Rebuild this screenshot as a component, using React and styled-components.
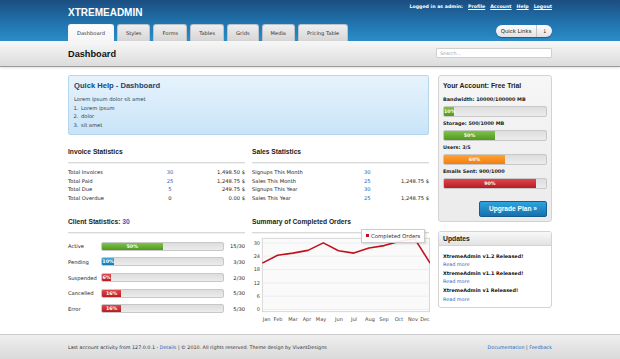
import { Fragment } from 'react'
import styled, { createGlobalStyle } from 'styled-components'

const HEAD = `"Liberation Sans", Arial, sans-serif`

const GlobalStyle = createGlobalStyle`
  html, body { margin: 0; padding: 0; }
  body {
    font-family: "DejaVu Sans", Verdana, sans-serif;
    color: #1e1e1e;
    background: #fff;
  }
  a { color: #2467c4; text-decoration: none; }
`

const Page = styled.div`
  min-height: 100vh;
  display: flex;
  flex-direction: column;
`

const Wrap = styled.div`
  width: 484px;
  margin: 0 auto;
`

/* ---------- header ---------- */

const Header = styled.header`
  height: 41px;
  background: linear-gradient(180deg, #1b4d80 0%, #2173ad 55%, #2b8dc8 100%);
`

const HeaderInner = styled(Wrap)`
  height: 100%;
  display: flex;
  flex-direction: column;
  justify-content: space-between;
`

const TopRow = styled.div`
  display: flex;
  justify-content: space-between;
  align-items: flex-start;
`

const Logo = styled.div`
  margin-top: 8px;
  font-family: ${HEAD};
  font-weight: bold;
  font-size: 10px;
  line-height: 10px;
  color: #fff;
`

const UserBar = styled.div`
  margin-top: 4px;
  font-size: 4.7px;
  line-height: 5px;
  font-weight: bold;
  color: #fff;

  a {
    color: #fff;
    text-decoration: underline;
    margin-left: 5px;
  }
`

const NavRow = styled.div`
  display: flex;
  justify-content: space-between;
  align-items: flex-end;
`

const Tabs = styled.nav`
  display: flex;
  gap: 3px;
`

const Tab = styled.div`
  height: 16px;
  line-height: 16px;
  padding: 0 8px;
  font-size: 5.15px;
  color: #333;
  border: 1px solid ${p => (p.$active ? '#f4f4f4' : '#b9c3cc')};
  border-bottom: none;
  border-radius: 3px 3px 0 0;
  background: ${p =>
    p.$active
      ? 'linear-gradient(180deg, #fdfdfd, #f6f6f6)'
      : 'linear-gradient(180deg, #eeeeee, #d6d6d6)'};
`

const QuickLinks = styled.div`
  margin-bottom: 4px;
  height: 12px;
  display: flex;
  align-items: center;
  border-radius: 6px;
  background: linear-gradient(180deg, #ffffff, #e1e1e1);
  box-shadow: 0 1px 1px rgba(0, 0, 0, 0.3);
  font-size: 5.4px;
  color: #222;
`

const QuickLabel = styled.span`
  padding: 0 5px;
`

const QuickArrow = styled.span`
  height: 100%;
  display: flex;
  align-items: center;
  padding: 0 5px;
  border-left: 1px solid #c4c4c4;
`

/* ---------- title bar ---------- */

const TitleBar = styled.div`
  height: 25px;
  background: linear-gradient(180deg, #f7f7f7, #dcdcdc);
  border-bottom: 1px solid #9a9a9a;
  box-shadow: 0 1px 2px rgba(0, 0, 0, 0.12);
`

const TitleInner = styled(Wrap)`
  height: 100%;
  display: flex;
  justify-content: space-between;
  align-items: center;
`

const PageTitle = styled.h1`
  margin: 0;
  font-family: ${HEAD};
  font-size: 9.2px;
  font-weight: bold;
  color: #111;
`

const Search = styled.input`
  width: 116px;
  height: 10px;
  box-sizing: border-box;
  margin-top: -1px;
  padding: 0 3px;
  border: 1px solid #cfcfcf;
  border-radius: 1px;
  font-family: inherit;
  font-size: 4.8px;
  color: #999;
  outline: none;

  &::placeholder { color: #aaa; }
`

/* ---------- main ---------- */

const Main = styled(Wrap)`
  flex: 1;
  display: grid;
  grid-template-columns: 361px 114px;
  column-gap: 9px;
  align-items: start;
  padding-top: 8px;
`

const Column = styled.div`
  display: flex;
  flex-direction: column;
`

const HelpBox = styled.div`
  height: 60px;
  box-sizing: border-box;
  padding: 5px 5px 0;
  border: 1px solid #b4d6ef;
  border-radius: 2px;
  background: linear-gradient(180deg, #e7f3fc, #c9e4f8);
  color: #2f3f52;
`

const HelpTitle = styled.h2`
  margin: 0;
  font-family: ${HEAD};
  font-size: 7.6px;
  line-height: 9px;
  color: #1b4573;
`

const HelpText = styled.div`
  margin-top: 5px;
  font-size: 5.2px;
  line-height: 8.6px;

  ol {
    margin: 0;
    padding-left: 6px;
    list-style-position: outside;
  }
  li { padding-left: 1px; }
`

const TwoCols = styled.div`
  display: grid;
  grid-template-columns: 177px 177px;
  column-gap: 7px;
  margin-top: ${p => p.$top}px;
`

const Section = styled.section`
  position: relative;
`

const SectionTitle = styled.h3`
  margin: 0;
  font-family: ${HEAD};
  font-size: 6.7px;
  line-height: 9px;
  font-weight: bold;
  color: #222;

  span { color: #2467c4; }
`

const Divider = styled.div`
  margin-top: 6px;
  border-top: 1px solid #d9d9d9;
  box-shadow: 0 1px 0 #f1f1f1;
`

const StatTable = styled.div`
  display: grid;
  grid-template-columns: ${p => p.$cols};
  margin-top: 5px;
  font-size: 5.2px;
  line-height: 8.6px;
`

const Num = styled.span`
  text-align: ${p => p.$align};
  color: ${p => (p.$plain ? '#222' : '#2467c4')};
`

const Amount = styled.span`
  text-align: right;
`

const ClientList = styled.div`
  margin-top: 5px;
`

const ClientRow = styled.div`
  height: 15.7px;
  display: grid;
  grid-template-columns: 33px 123px 1fr;
  align-items: center;
  font-size: 5.2px;
`

const Track = styled.div`
  height: ${p => p.$h}px;
  box-sizing: border-box;
  border: 1px solid #c8c8c8;
  border-radius: 2px;
  background: linear-gradient(180deg, #dddddd, #ececec);
  overflow: hidden;
`

const tones = {
  green: ['#80c348', '#4e9a1f'],
  blue: ['#39a6dc', '#1679b5'],
  red: ['#df474d', '#b51d24'],
  orange: ['#ffa236', '#f27f0c'],
}

const Fill = styled.div`
  height: 100%;
  min-width: 9px;
  background: linear-gradient(180deg, ${p => tones[p.$tone][0]}, ${p => tones[p.$tone][1]});
  color: #fff;
  font-size: 4.8px;
  font-weight: bold;
  text-align: center;
  line-height: ${p => p.$h - 2}px;
`

const ClientValue = styled.span`
  text-align: right;
`

const ChartSvg = styled.svg`
  display: block;
  font-family: "DejaVu Sans", Verdana, sans-serif;
`

const Legend = styled.div`
  position: absolute;
  left: 109px;
  top: 11.5px;
  width: 64px;
  height: 14px;
  box-sizing: border-box;
  display: flex;
  align-items: center;
  gap: 2px;
  padding-left: 4px;
  background: rgba(255, 255, 255, 0.92);
  border: 1px solid #cccccc;
  box-shadow: 1px 1px 2px rgba(0, 0, 0, 0.15);
  font-size: 5.4px;
  color: #333;
`

const Swatch = styled.i`
  width: 3px;
  height: 3px;
  background: #c1121c;
`

/* ---------- right column ---------- */

const Box = styled.div`
  box-sizing: border-box;
  border: 1px solid #d3d3d3;
  border-radius: 3px;
  margin-top: ${p => p.$top || 0}px;
`

const AccountBox = styled(Box)`
  padding: 4.5px 4px 4px;
  background: linear-gradient(180deg, #f6f6f6, #ebebeb);
`

const BoxTitle = styled.h4`
  margin: 0;
  font-family: ${HEAD};
  font-size: 6.8px;
  line-height: 9px;
  color: #222;
`

const UsageLabel = styled.div`
  margin-top: ${p => p.$top}px;
  margin-bottom: 3px;
  font-size: 4.9px;
  font-weight: bold;
  line-height: 7px;
  color: #222;
`

const UpgradeButton = styled.button`
  display: block;
  margin: 11.5px 0 0 auto;
  width: 68px;
  height: 16px;
  padding: 0;
  border: 1px solid #135d91;
  border-radius: 2px;
  background: linear-gradient(180deg, #2ea3de, #1670ad);
  color: #fff;
  font-family: ${HEAD};
  font-size: 6.6px;
  font-weight: bold;
`

const UpdatesBox = styled(Box)`
  background: #fff;
  overflow: hidden;
`

const UpdatesHead = styled.div`
  height: 13px;
  line-height: 13px;
  padding: 0 4px;
  background: linear-gradient(180deg, #f8f8f8, #e3e3e3);
  border-bottom: 1px solid #d3d3d3;
  font-family: ${HEAD};
  font-size: 6.8px;
  font-weight: bold;
  color: #222;
`

const UpdatesBody = styled.div`
  padding: 5.7px 4px 4px;
  font-size: 4.9px;
  line-height: 8.6px;
`

const UpdateTitle = styled.div`
  font-weight: bold;
  color: #111;
`

/* ---------- footer ---------- */

const Footer = styled.footer`
  height: 25px;
  box-sizing: border-box;
  border-top: 1px solid #c9c9c9;
  background: linear-gradient(180deg, #efefef, #d9d9d9);
`

const FooterInner = styled(Wrap)`
  height: 100%;
  display: flex;
  justify-content: space-between;
  align-items: center;
  font-size: 4.8px;
  color: #333;
`

/* ---------- data ---------- */

const tabs = ['Dashboard', 'Styles', 'Forms', 'Tables', 'Grids', 'Media', 'Pricing Table']

const invoice = [
  ['Total Invoices', '30', '1,498.50 $'],
  ['Total Paid', '25', '1,248.75 $'],
  ['Total Due', '5', '249.75 $'],
  ['Total Overdue', '0', '0.00 $', true],
]

const sales = [
  ['Signups This Month', '30', ''],
  ['Sales This Month', '25', '1,248.75 $'],
  ['Signups This Year', '30', ''],
  ['Sales This Year', '25', '1,248.75 $'],
]

const clients = [
  ['Active', 50, 'green', '15/30'],
  ['Pending', 10, 'blue', '3/30'],
  ['Suspended', 6, 'red', '2/30'],
  ['Cancelled', 16, 'red', '5/30'],
  ['Error', 16, 'red', '5/30'],
]

const usage = [
  ['Bandwidth: 10000/100000 MB', 10, 'green'],
  ['Storage: 500/1000 MB', 50, 'green'],
  ['Users: 3/5', 60, 'orange'],
  ['Emails Sent: 900/1000', 90, 'red'],
]

const updates = ['XtremeAdmin v1.2 Released!', 'XtremeAdmin v1.1 Released!', 'XtremeAdmin v1 Released!']

const months = ['Jan', 'Feb', 'Mar', 'Apr', 'May', 'Jun', 'Jul', 'Aug', 'Sep', 'Oct', 'Nov', 'Dec']
const monthX = [14.7, 26, 41, 55, 69, 87, 102, 118, 132, 147, 161, 173]
const orders = [20.9, 24.4, 25.4, 26.6, 30, 26.5, 25.4, 27.7, 28.8, 30.7, 31.8, 20.9]
const yOf = v => 76.5 - 2.22 * v

function OrdersChart() {
  const pts = orders.map((v, i) => `${(10.3 + i * 15.25).toFixed(1)},${yOf(v).toFixed(1)}`).join(' ')
  return (
    <ChartSvg width="178" height="92" viewBox="0 0 178 92">
      <rect x="10.3" y="5.3" width="167.2" height="73.4" fill="#fafafa" stroke="#cfcfcf" strokeWidth="0.8" />
      {[0, 6, 12, 18, 24, 30].map(t => (
        <g key={t}>
          <line x1="10.3" x2="177.5" y1={yOf(t)} y2={yOf(t)} stroke="#e6e6e6" strokeWidth="0.6" />
          <text x="8" y={yOf(t) + 1.8} fontSize="5" fill="#444" textAnchor="end">{t}</text>
        </g>
      ))}
      <polyline points={pts} fill="none" stroke="#c1121c" strokeWidth="1.6" strokeLinejoin="round" />
      {months.map((m, i) => (
        <text key={m} x={monthX[i]} y="88" fontSize="5" fill="#444" textAnchor="middle">{m}</text>
      ))}
    </ChartSvg>
  )
}

function Bar({ pct, tone, h }) {
  return (
    <Track $h={h}>
      <Fill $tone={tone} $h={h} style={{ width: `${pct}%` }}>{pct}%</Fill>
    </Track>
  )
}

export default function App() {
  return (
    <Page>
      <GlobalStyle />
      <Header>
        <HeaderInner>
          <TopRow>
            <Logo>XTREMEADMIN</Logo>
            <UserBar>
              Logged in as admin:
              <a href="#">Profile</a>
              <a href="#">Account</a>
              <a href="#">Help</a>
              <a href="#">Logout</a>
            </UserBar>
          </TopRow>
          <NavRow>
            <Tabs>
              {tabs.map((t, i) => (
                <Tab key={t} $active={i === 0}>{t}</Tab>
              ))}
            </Tabs>
            <QuickLinks>
              <QuickLabel>Quick Links</QuickLabel>
              <QuickArrow>↓</QuickArrow>
            </QuickLinks>
          </NavRow>
        </HeaderInner>
      </Header>

      <TitleBar>
        <TitleInner>
          <PageTitle>Dashboard</PageTitle>
          <Search placeholder="Search..." />
        </TitleInner>
      </TitleBar>

      <Main>
        <Column>
          <HelpBox>
            <HelpTitle>Quick Help - Dashboard</HelpTitle>
            <HelpText>
              Lorem ipsum dolor sit amet
              <ol>
                <li>Lorem ipsum</li>
                <li>dolor</li>
                <li>sit amet</li>
              </ol>
            </HelpText>
          </HelpBox>

          <TwoCols $top={12}>
            <Section>
              <SectionTitle>Invoice Statistics</SectionTitle>
              <Divider />
              <StatTable $cols="92px 20px 1fr">
                {invoice.map(([label, n, amt, plain]) => (
                  <Fragment key={label}>
                    <span>{label}</span>
                    <Num $align="center" $plain={plain}>{n}</Num>
                    <Amount>{amt}</Amount>
                  </Fragment>
                ))}
              </StatTable>
            </Section>
            <Section>
              <SectionTitle>Sales Statistics</SectionTitle>
              <Divider />
              <StatTable $cols="112px 20px 1fr">
                {sales.map(([label, n, amt]) => (
                  <Fragment key={label}>
                    <span>{label}</span>
                    <Num $align="left">{n}</Num>
                    <Amount>{amt}</Amount>
                  </Fragment>
                ))}
              </StatTable>
            </Section>
          </TwoCols>

          <TwoCols $top={15}>
            <Section>
              <SectionTitle>Client Statistics: <span>30</span></SectionTitle>
              <Divider />
              <ClientList>
                {clients.map(([label, pct, tone, val]) => (
                  <ClientRow key={label}>
                    <span>{label}</span>
                    <Bar pct={pct} tone={tone} h={9} />
                    <ClientValue>{val}</ClientValue>
                  </ClientRow>
                ))}
              </ClientList>
            </Section>
            <Section>
              <SectionTitle>Summary of Completed Orders</SectionTitle>
              <Divider />
              <OrdersChart />
              <Legend><Swatch />Completed Orders</Legend>
            </Section>
          </TwoCols>
        </Column>

        <Column>
          <AccountBox>
            <BoxTitle>Your Account: Free Trial</BoxTitle>
            {usage.map(([label, pct, tone], i) => (
              <div key={label}>
                <UsageLabel $top={i === 0 ? 6 : 3.3}>{label}</UsageLabel>
                <Bar pct={pct} tone={tone} h={11} />
              </div>
            ))}
            <UpgradeButton>Upgrade Plan »</UpgradeButton>
          </AccountBox>

          <UpdatesBox $top={9}>
            <UpdatesHead>Updates</UpdatesHead>
            <UpdatesBody>
              {updates.map(u => (
                <div key={u}>
                  <UpdateTitle>{u}</UpdateTitle>
                  <a href="#">Read more</a>
                </div>
              ))}
            </UpdatesBody>
          </UpdatesBox>
        </Column>
      </Main>

      <Footer>
        <FooterInner>
          <span>
            Last account activity from 127.0.0.1 - <a href="#">Details</a> | © 2010. All rights reserved. Theme design by VivantDesigns
          </span>
          <span>
            <a href="#">Documentation</a> | <a href="#">Feedback</a>
          </span>
        </FooterInner>
      </Footer>
    </Page>
  )
}
